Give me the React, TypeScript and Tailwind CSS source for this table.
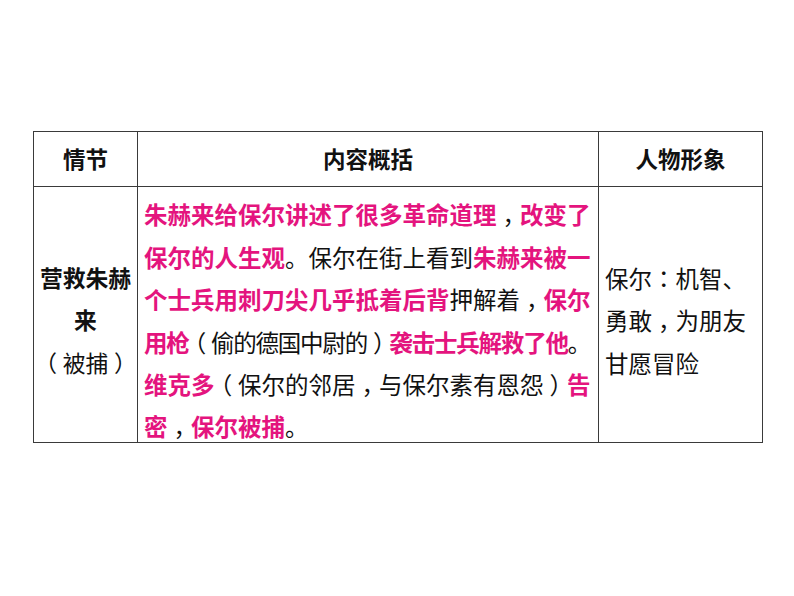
const PINK = "text-[#e4147e] font-bold";

type Seg = { t: string; hot?: boolean };

const summary: Seg[][] = [
  [{ t: "朱赫来给保尔讲述了很多革命道理", hot: true }, { t: "，" }, { t: "改变了", hot: true }],
  [{ t: "保尔的人生观", hot: true }, { t: "。保尔在街上看到" }, { t: "朱赫来被一", hot: true }],
  [{ t: "个士兵用刺刀尖几乎抵着后背", hot: true }, { t: "押解着，" }, { t: "保尔", hot: true }],
  [{ t: "用枪", hot: true }, { t: "（偷的德国中尉的）" }, { t: "袭击士兵解救了他", hot: true }, { t: "。" }],
  [{ t: "维克多", hot: true }, { t: "（保尔的邻居，与保尔素有恩怨）" }, { t: "告", hot: true }],
  [{ t: "密", hot: true }, { t: "，" }, { t: "保尔被捕", hot: true }, { t: "。" }],
];

const traits = ["保尔：机智、", "勇敢，为朋友", "甘愿冒险"];

// the slide's font sets these full-width marks centred in their cell:
// take the half-width form and pad it back out to a full em
const HALF = "[font-feature-settings:'halt'] mx-[0.25em]";
const PUNCT: Record<string, string> = {
  "，": HALF,
  "（": HALF,
  "）": HALF,
  "：": "font-['Noto_Sans_CJK_KR',sans-serif]",
};

function Txt({ t }: { t: string }) {
  const parts = t.split(/([，：（）])/).filter(Boolean);
  return (
    <>
      {parts.map((p, i) => (
        <span key={i} className={PUNCT[p] ?? ""}>
          {p}
        </span>
      ))}
    </>
  );
}

export default function App() {
  return (
    <div
      className="w-[794px] h-[596px] bg-white pt-[131px] pl-[33px] text-[#111]"
      style={{ fontFamily: '"Noto Sans CJK SC", "Noto Sans", sans-serif' }}
    >
      <table className="border-collapse w-[729px] table-fixed">
        <colgroup>
          <col className="w-[104px]" />
          <col className="w-[461px]" />
          <col className="w-[164px]" />
        </colgroup>
        <thead>
          <tr className="h-[55px] text-[22.5px] font-bold">
            <th className="border border-[#3a3a3a] p-0 align-middle">情节</th>
            <th className="border border-[#3a3a3a] p-0 align-middle">内容概括</th>
            <th className="border border-[#3a3a3a] p-0 align-middle">人物形象</th>
          </tr>
        </thead>
        <tbody>
          <tr className="h-[256px]">
            <td className="border border-[#3a3a3a] p-0 align-middle text-center text-[22.8px] leading-[42.5px]">
              <div className="mt-[6px] -mb-[6px]">
                <div className="font-bold whitespace-nowrap">营救朱赫</div>
                <div className="font-bold">来</div>
                <div className="whitespace-nowrap">
                  <Txt t="（被捕）" />
                </div>
              </div>
            </td>
            <td className="border border-[#3a3a3a] p-0 pl-[6px] align-middle text-[23.5px] leading-[42.4px]">
              <div className="mt-[6px] -mb-[6px]">
                {summary.map((line, i) => (
                  <div key={i} className={i === 3 ? "whitespace-nowrap tracking-[-1.2px]" : "whitespace-nowrap"}>
                    {line.map((s, j) => (
                      <span key={j} className={s.hot ? PINK : ""}>
                        <Txt t={s.t} />
                      </span>
                    ))}
                  </div>
                ))}
              </div>
            </td>
            <td className="border border-[#3a3a3a] p-0 pl-[6px] align-middle text-[23.5px] leading-[42.5px]">
              <div className="mt-[6px] -mb-[6px]">
                {traits.map((t) => (
                  <div key={t} className="whitespace-nowrap">
                    <Txt t={t} />
                  </div>
                ))}
              </div>
            </td>
          </tr>
        </tbody>
      </table>
    </div>
  );
}
